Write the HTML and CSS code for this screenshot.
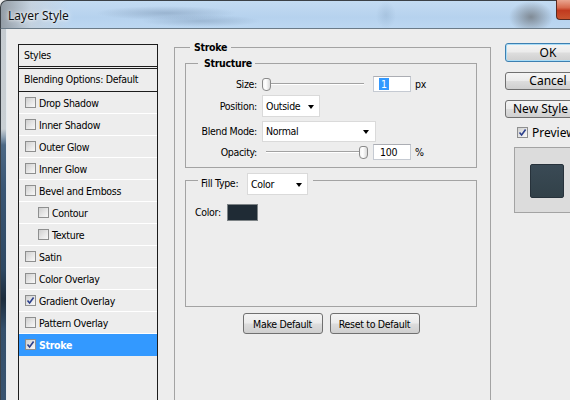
FILE: index.html
```html
<!DOCTYPE html>
<html>
<head>
<meta charset="utf-8">
<link rel="stylesheet" href="styles.css">
</head>
<body>
<div class="window">
  <div class="titlebar">
    <span class="title">Layer Style</span>
    <span class="close"></span>
  </div>
  <div class="main">
    <div class="frame"></div>
    <div class="content">
      <div class="list">
        <div class="list-head">Styles</div>
        <div class="list-blend">Blending Options: Default</div>
        <div class="item"><span class="cb"></span>Drop Shadow</div>
        <div class="item"><span class="cb"></span>Inner Shadow</div>
        <div class="item"><span class="cb"></span>Outer Glow</div>
        <div class="item"><span class="cb"></span>Inner Glow</div>
        <div class="item"><span class="cb"></span>Bevel and Emboss</div>
        <div class="item indent"><span class="cb"></span>Contour</div>
        <div class="item indent"><span class="cb"></span>Texture</div>
        <div class="item"><span class="cb"></span>Satin</div>
        <div class="item"><span class="cb"></span>Color Overlay</div>
        <div class="item"><span class="cb checked"><svg viewBox="0 0 9 9" width="9" height="9"><path d="M1.5 4.5 L3.6 7 L7.6 1.5" fill="none" stroke="#2b3f8c" stroke-width="1.6"/></svg></span>Gradient Overlay</div>
        <div class="item"><span class="cb"></span>Pattern Overlay</div>
        <div class="item selected"><span class="cb checked"><svg viewBox="0 0 9 9" width="9" height="9"><path d="M1.5 4.5 L3.6 7 L7.6 1.5" fill="none" stroke="#2b3f8c" stroke-width="1.6"/></svg></span>Stroke</div>
      </div>

      <div class="group outer">
        <div class="legend outer-legend">Stroke</div>
        <div class="group structure">
          <div class="legend structure-legend">Structure</div>
          <div class="row row-size">
            <span class="lbl">Size:</span>
            <div class="slider"><span class="thumb"></span></div>
            <div class="input"><span class="sel">1</span></div>
            <span class="unit">px</span>
          </div>
          <div class="row row-pos">
            <span class="lbl">Position:</span>
            <div class="select sel-pos"><span>Outside</span><span class="arrow"></span></div>
          </div>
          <div class="row row-blend">
            <span class="lbl">Blend Mode:</span>
            <div class="select sel-blend"><span>Normal</span><span class="arrow"></span></div>
          </div>
          <div class="row row-op">
            <span class="lbl">Opacity:</span>
            <div class="slider slider-end"><span class="thumb"></span></div>
            <div class="input input-op"><span>100</span></div>
            <span class="unit">%</span>
          </div>
        </div>
        <div class="group fill">
          <div class="legend fill-legend">
            <span class="ft-lbl">Fill Type:</span>
            <div class="select sel-fill"><span>Color</span><span class="arrow"></span></div>
          </div>
          <div class="color-row">
            <span class="color-lbl">Color:</span>
            <span class="swatch"></span>
          </div>
        </div>
        <div class="btn-row">
          <button class="btn btn-make">Make Default</button>
          <button class="btn btn-reset">Reset to Default</button>
        </div>
      </div>

      <div class="side">
        <button class="sbtn ok">OK</button>
        <button class="sbtn">Cancel</button>
        <button class="sbtn newstyle">New Style</button>
        <div class="preview-row">
          <span class="cb checked"><svg viewBox="0 0 9 9" width="9" height="9"><path d="M1.5 4.5 L3.6 7 L7.6 1.5" fill="none" stroke="#2b3f8c" stroke-width="1.6"/></svg></span>
          <span class="preview-lbl">Preview</span>
        </div>
        <div class="preview-box"><div class="preview-swatch"></div></div>
      </div>
    </div>
  </div>
</div>
</body>
</html>
```
FILE: styles.css
```css
html, body {
  margin: 0;
  padding: 0;
}
body {
  width: 570px;
  height: 400px;
  overflow: hidden;
  background: #ededed;
  font-family: "DejaVu Sans Condensed", "DejaVu Sans", sans-serif;
  font-stretch: condensed;
  font-size: 10.5px;
  letter-spacing: -0.3px;
  color: #000;
}
.window {
  width: 570px;
  height: 400px;
  display: flex;
  flex-direction: column;
}
.titlebar {
  height: 29px;
  flex: none;
  box-sizing: border-box;
  display: flex;
  align-items: flex-start;
  justify-content: space-between;
  border-top: 1px solid #3b4147;
  border-left: 1px solid #3b4147;
  border-bottom: 1px solid #6b7b88;
  border-top-left-radius: 7px;
  background:
    radial-gradient(ellipse 70px 7px at 165px 12px, rgba(95,120,150,0.35), transparent),
    radial-gradient(ellipse 60px 6px at 200px 20px, rgba(95,120,150,0.3), transparent),
    radial-gradient(ellipse 22px 16px at 530px 16px, rgba(110,115,120,0.75), transparent),
    radial-gradient(ellipse 10px 14px at 385px 14px, rgba(120,150,180,0.25), transparent),
    linear-gradient(90deg, rgba(140,146,152,0.85) 0, rgba(200,206,212,0.6) 30px, rgba(190,210,230,0) 70px),
    linear-gradient(180deg, #c3dbf2 0%, #b6d2ee 60%, #bcd7f1 100%);
}
.title {
  font-family: "Noto Sans", "Open Sans", sans-serif;
  font-stretch: normal;
  font-size: 12px;
  letter-spacing: 0;
  color: #111;
  margin: 6px 0 0 7px;
  text-shadow: 0 0 6px #fff, 0 0 3px #fff;
}
.close {
  width: 14px;
  height: 20px;
  margin-top: -1px;
  box-sizing: border-box;
  border-left: 1px solid #5b2a20;
  border-bottom: 1px solid #5b2a20;
  border-bottom-left-radius: 4px;
  background: linear-gradient(180deg, #e9a590 0%, #d76a4e 40%, #c13a1f 55%, #c9542f 100%);
}
.main {
  flex: 1;
  display: flex;
  min-height: 0;
}
.frame {
  width: 7px;
  flex: none;
  box-sizing: border-box;
  border-left: 1px solid #3b4147;
  border-right: 1px solid #e6ebef;
  background: linear-gradient(180deg, #c5cbd0 0, #c9cfd3 100px, #8ea1b3 108px, #4d6985 116px, #3a5674 160px, #2e4862 240px, #1c2c3c 270px, #344f6b 300px, #38536f 100%);
}
.content {
  flex: 1;
  display: flex;
  align-items: flex-start;
  background: #ededed;
  overflow: hidden;
}

/* list */
.list {
  flex: none;
  margin: 15px 0 0 11px;
  width: 140px;
  height: 380px;
  box-sizing: border-box;
  border: 1px solid #1c1c1c;
}
.list-head {
  height: 21px;
  line-height: 21px;
  padding-left: 5px;
  border-bottom: 3px double #1c1c1c;
}
.list-blend {
  height: 22px;
  line-height: 21px;
  padding-left: 5px;
  border-bottom: 1px solid #1c1c1c;
}
.item {
  height: 21px;
  border-bottom: 1px solid #ffffff;
  display: flex;
  align-items: center;
  padding-left: 6px;
}
.item.indent {
  padding-left: 19px;
}
.item.selected {
  background: #3399ff;
  color: #fff;
  font-weight: bold;
  border-bottom-color: #3399ff;
}
.cb {
  flex: none;
  width: 11px;
  height: 11px;
  box-sizing: border-box;
  border: 1px solid #8e8f8f;
  background: linear-gradient(135deg, #cfcfcf 0%, #e9e9e9 60%, #f8f8f8 100%);
  margin-right: 3px;
  display: flex;
  align-items: center;
  justify-content: center;
}
.cb svg {
  display: block;
}

/* groups */
.group {
  flex: none;
  box-sizing: border-box;
  border: 1px solid #a3a3a3;
  display: flex;
  flex-direction: column;
  align-items: flex-start;
}
.legend {
  height: 14px;
  line-height: 14px;
  margin-top: -8px;
  background: #ededed;
  font-weight: bold;
}
.outer {
  margin: 18px 0 0 16px;
  width: 317px;
  height: 380px;
}
.outer-legend {
  margin-left: 15px;
  padding: 0 4px;
}
.structure {
  margin: 9px 0 0 10px;
  width: 292px;
  padding-bottom: 5px;
}
.structure-legend {
  margin-left: 12px;
  padding: 0 3px 0 6px;
}
.row {
  align-self: stretch;
  display: flex;
  align-items: center;
  height: 22px;
}
.row-size { margin-top: 3px; }
.row-blend { margin-top: 3px; }
.row-op { height: 20px; }
.lbl {
  width: 71px;
  text-align: right;
  margin-right: 5px;
  flex: none;
}
.slider {
  width: 104px;
  height: 22px;
  flex: none;
  display: flex;
  align-items: center;
  background:
    linear-gradient(#a2a2a2, #a2a2a2) 4px 10px / 98px 1px no-repeat,
    linear-gradient(#ffffff, #ffffff) 4px 11px / 98px 1px no-repeat;
}
.row-op .slider {
  width: 107px;
  height: 20px;
  background:
    linear-gradient(#a2a2a2, #a2a2a2) 4px 9px / 99px 1px no-repeat,
    linear-gradient(#ffffff, #ffffff) 4px 10px / 99px 1px no-repeat;
}
.slider-end {
  justify-content: flex-end;
}
.slider-end .thumb {
  margin-right: 1px;
}
.thumb {
  width: 9px;
  height: 13px;
  box-sizing: border-box;
  border: 1px solid #8a8a8a;
  border-radius: 3px 3px 4px 4px;
  background: linear-gradient(90deg, #f4f4f4 0%, #ffffff 40%, #d9d9d9 100%);
}
.input {
  margin-left: 7px;
  width: 38px;
  height: 16px;
  box-sizing: border-box;
  border: 1px solid #c5cad2;
  border-top-color: #abadb3;
  background: #fff;
  display: flex;
  align-items: center;
  padding-left: 5px;
}
.input-op {
  margin-left: 4px;
  padding-left: 6px;
}
.sel {
  background: #3399ff;
  color: #fff;
  padding: 0 2px;
  line-height: 12px;
}
.unit {
  margin-left: 4px;
}
.select {
  flex: none;
  box-sizing: border-box;
  height: 21px;
  background: #fff;
  border: 1px solid #dadada;
  display: flex;
  align-items: center;
  justify-content: space-between;
  padding: 0 5px 0 3px;
  font-weight: normal;
}
.sel-pos { width: 58px; height: 22px; }
.sel-blend { width: 114px; padding-right: 6px; }
.sel-fill { width: 61px; height: 22px; }
.arrow {
  width: 0;
  height: 0;
  border-left: 3.5px solid transparent;
  border-right: 3.5px solid transparent;
  border-top: 4px solid #000;
  margin-top: 1px;
}
.fill {
  margin: 12px 0 0 10px;
  width: 292px;
  height: 127px;
}
.fill-legend {
  height: 22px;
  line-height: normal;
  margin-left: 12px;
  padding: 0 5px 0 3px;
  display: flex;
  align-items: center;
  font-weight: normal;
}
.ft-lbl {
  width: 46px;
  margin-top: -3px;
}
.color-row {
  margin: 9px 0 0 9px;
  height: 16px;
  display: flex;
  align-items: center;
}
.color-lbl {
  width: 32px;
}
.swatch {
  width: 31px;
  height: 17px;
  box-sizing: border-box;
  border: 1px solid #7d8386;
  background: #1f2b35;
}
.btn-row {
  margin: 6px 0 0 10px;
  width: 292px;
  display: flex;
  justify-content: center;
  gap: 7px;
}
.btn {
  height: 21px;
  box-sizing: border-box;
  border: 1px solid #707070;
  border-radius: 3px;
  background: linear-gradient(180deg, #f4f4f4 0%, #ebebeb 48%, #dddddd 52%, #cfcfcf 100%);
  font: inherit;
  letter-spacing: inherit;
  color: #000;
  padding: 0;
}
.btn-make { width: 80px; }
.btn-reset { width: 90px; }

/* side */
.side {
  flex: none;
  width: 86px;
  margin: 14px 0 0 14px;
  display: flex;
  flex-direction: column;
  align-items: flex-start;
}
.sbtn {
  width: 86px;
  height: 18px;
  box-sizing: border-box;
  border: 1px solid #707070;
  border-radius: 3px;
  background: linear-gradient(180deg, #f4f4f4 0%, #ebebeb 48%, #dddddd 52%, #cfcfcf 100%);
  font-family: "Noto Sans", "Open Sans", sans-serif;
  font-stretch: normal;
  font-size: 12px;
  letter-spacing: 0;
  line-height: 14px;
  color: #000;
  padding: 0;
  margin-top: 10px;
}
.sbtn.ok {
  height: 19px;
  margin-top: 0;
  border-color: #3c7fb1;
  box-shadow: inset 0 0 0 1px #a9dcf6;
}
.sbtn.newstyle {
  text-align: left;
  padding-left: 7px;
  white-space: nowrap;
}
.preview-row {
  margin-top: 4px;
  height: 20px;
  padding-left: 12px;
  display: flex;
  align-items: center;
}
.preview-row .cb {
  margin-right: 4px;
}
.preview-lbl {
  font-family: "Noto Sans", "Open Sans", sans-serif;
  font-stretch: normal;
  font-size: 12px;
  letter-spacing: 0;
  white-space: nowrap;
}
.preview-box {
  margin: 5px 0 0 9px;
  width: 66px;
  height: 66px;
  flex: none;
  box-sizing: border-box;
  border: 1px solid #a3a3a3;
  background: #dcdcdc;
  padding: 16px 0 0 15px;
}
.preview-swatch {
  width: 34px;
  height: 34px;
  box-sizing: border-box;
  border: 1px solid #27323b;
  border-radius: 2px;
  background: linear-gradient(180deg, #3a4a55 0%, #324149 100%);
}
```
